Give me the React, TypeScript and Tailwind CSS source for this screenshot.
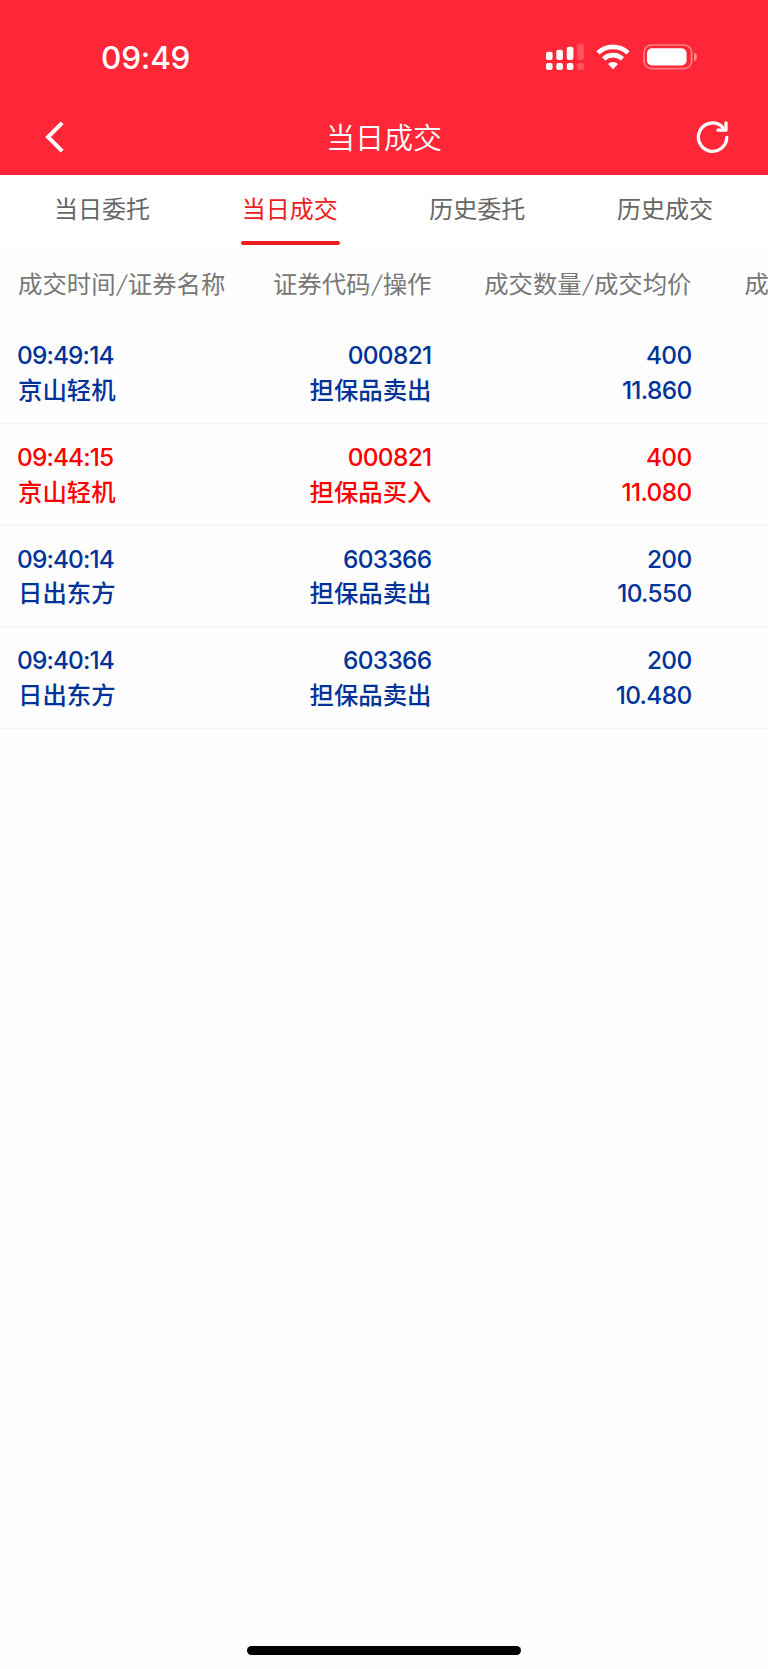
import React from 'react';

type Side = 'buy' | 'sell';

interface Trade {
    id: number;
    time: string;
    name: string;
    code: string;
    action: string;
    amount: string;
    price: string;
    side: Side;
}

const tabs = ['当日委托', '当日成交', '历史委托', '历史成交'];

const trades: Trade[] = [
    { id: 1, time: '09:49:14', name: '京山轻机', code: '000821', action: '担保品卖出', amount: '400', price: '11.860', side: 'sell' },
    { id: 2, time: '09:44:15', name: '京山轻机', code: '000821', action: '担保品买入', amount: '400', price: '11.080', side: 'buy' },
    { id: 3, time: '09:40:14', name: '日出东方', code: '603366', action: '担保品卖出', amount: '200', price: '10.550', side: 'sell' },
    { id: 4, time: '09:40:14', name: '日出东方', code: '603366', action: '担保品卖出', amount: '200', price: '10.480', side: 'sell' },
];

function SignalIcon() {
    return (
        <svg width="38" height="28" viewBox="0 0 38 28" fill="#fff">
            <rect x="0" y="8.7" width="6.6" height="8.3" rx="2" />
            <rect x="10.3" y="6.7" width="6.6" height="10.3" rx="2" />
            <rect x="20.8" y="3.7" width="6.6" height="13.3" rx="2" />
            <rect x="31.3" y="0.7" width="6.6" height="16.3" rx="2" opacity="0.2" />
            <rect x="0" y="20" width="6.6" height="7" rx="2" />
            <rect x="10.3" y="20" width="6.6" height="7" rx="2" />
            <rect x="20.8" y="20" width="6.6" height="7" rx="2" />
            <rect x="31.3" y="20" width="6.6" height="7" rx="2" opacity="0.2" />
        </svg>
    );
}

function WifiIcon() {
    return (
        <svg width="34" height="26" viewBox="0 0 34 26" fill="none" stroke="#fff">
            <path d="M1.9 8.9a21.8 21.8 0 0 1 30.2 0" strokeWidth="4.7" />
            <path d="M7.6 14.9a13.7 13.7 0 0 1 18.8 0" strokeWidth="4.7" />
            <path d="M12 19.9a7.4 7.4 0 0 1 10 0l-5 5.3z" fill="#fff" stroke="none" />
        </svg>
    );
}

function BatteryIcon() {
    return (
        <svg width="55" height="26" viewBox="0 0 55 26">
            <rect x="1" y="1" width="47.6" height="23.6" rx="7.6" fill="none" stroke="#fff" strokeOpacity="0.4" strokeWidth="1.7" />
            <rect x="4" y="4.2" width="39.6" height="17.2" rx="5" fill="#fff" />
            <path d="M51 8.4c4 1.2 4 7.6 0 8.8z" fill="#fff" fillOpacity="0.45" />
        </svg>
    );
}

function BackIcon() {
    return (
        <svg width="20" height="32" viewBox="0 0 20 32" fill="none" stroke="#fff" strokeWidth="4">
            <path d="M17.2 1.8 3 16l14.2 14.2" />
        </svg>
    );
}

function RefreshIcon() {
    return (
        <svg width="34" height="34" viewBox="0 0 34 34" fill="none" stroke="#fff" strokeWidth="3.3" strokeLinecap="round" strokeLinejoin="round">
            <path d="M30.8 17.3A14.2 14.2 0 1 1 26.8 7.3" />
            <path d="M30 2.9v7.3h-8" />
        </svg>
    );
}

function Slash() {
    return <span className="inline-block w-[12.2px] -skew-x-12 text-center font-light">/</span>;
}

function TradeRow({ trade }: { trade: Trade }) {
    return (
        <div
            className={`flex h-[101.8px] shrink-0 border-b border-[#f3f3f3] pt-4 text-[24.4px] leading-[34.7px] font-medium ${trade.side === 'buy' ? 'text-[#ff0000]' : 'text-[#003399]'}`}
        >
            <div className="w-[231px] pl-[18px]">
                <p className="-ml-px pt-px leading-[33.7px] tracking-[-0.85px]">{trade.time}</p>
                <p>{trade.name}</p>
            </div>
            <div className="w-[200.5px] text-right">
                <p className="pt-px leading-[33.7px] tracking-[-0.65px]">{trade.code}</p>
                <p>{trade.action}</p>
            </div>
            <div className="w-[260px] text-right">
                <p className="pt-px leading-[33.7px] tracking-[-0.65px]">{trade.amount}</p>
                <p className="tracking-[-0.65px]">{trade.price}</p>
            </div>
        </div>
    );
}

export default function App() {
    return (
        <div className="flex h-[1669px] w-[768px] flex-col overflow-hidden bg-[#fefefe] font-['Inter','Noto_Sans_CJK_SC',sans-serif]">
            <header className="flex h-[175px] shrink-0 flex-col bg-[#ff2737] text-white">
                <div className="flex h-[114px] items-center justify-between pr-[70px] pl-[101px]">
                    <span className="pt-px text-[31.5px] leading-none font-[550] tracking-[-0.2px]">09:49</span>
                    <div className="flex items-center">
                        <SignalIcon />
                        <div className="mr-[13px] ml-3">
                            <WifiIcon />
                        </div>
                        <BatteryIcon />
                    </div>
                </div>
                <div className="flex h-[46px] items-center justify-between pr-[38px] pl-[45px]">
                    <button className="w-[27px]"><BackIcon /></button>
                    <h1 className="pt-0.5 text-[29px] leading-none font-[350]">当日成交</h1>
                    <button><RefreshIcon /></button>
                </div>
            </header>

            <nav className="flex h-[72px] shrink-0 justify-between bg-white px-[53px] text-2xl text-[#666]">
                {tabs.map((tab, i) => (
                    <div key={tab} className={`flex w-[99px] flex-col items-center ${i === 1 ? 'text-[#ec2020]' : ''}`}>
                        <span className="pt-[17px] pr-px leading-9 whitespace-nowrap">{tab}</span>
                        {i === 1 && <span className="mt-[13px] h-1 w-full rounded-full bg-[#ec2020]" />}
                    </div>
                ))}
            </nav>

            {/* the fourth column runs past the right edge of the screen */}
            <div className="flex h-[75px] shrink-0 items-center text-[24.4px] whitespace-nowrap text-[#777]">
                <span className="w-[231px] shrink-0 pl-[18px]">成交时间<Slash />证券名称</span>
                <span className="w-[200.5px] shrink-0 text-right">证券代码<Slash />操作</span>
                <span className="w-[260px] shrink-0 text-right">成交数量<Slash />成交均价</span>
                <span className="shrink-0 pl-[53px]">成交金额</span>
            </div>

            {trades.map((trade) => (
                <TradeRow key={trade.id} trade={trade} />
            ))}

            <div className="mt-auto mb-[14px] h-[9px] w-[274px] shrink-0 self-center rounded-full bg-black" />
        </div>
    );
}
